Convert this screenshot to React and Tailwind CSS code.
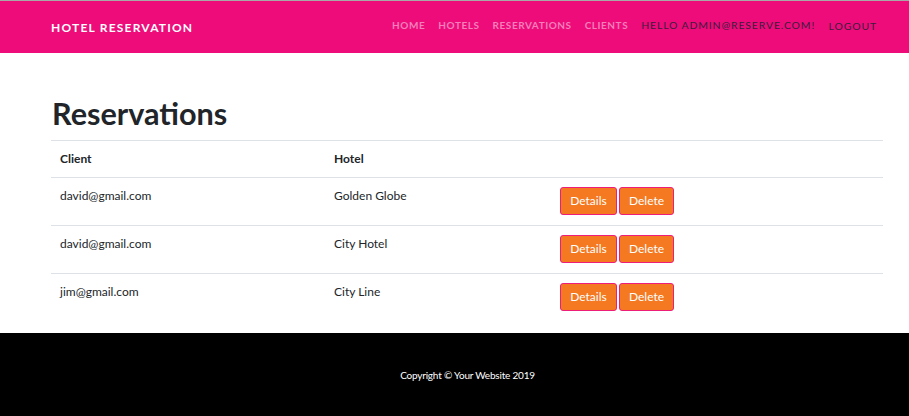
import React from 'react';

const navLinks = ['Home', 'Hotels', 'Reservations', 'Clients'];

const reservations = [
  { client: 'david@gmail.com', hotel: 'Golden Globe' },
  { client: 'david@gmail.com', hotel: 'City Hotel' },
  { client: 'jim@gmail.com', hotel: 'City Line' },
];

const App = () => {
  return (
    <div className="min-h-[416px] flex flex-col bg-white font-['Lato',_'Liberation_Sans',_sans-serif] text-[#212529]">
      <nav className="h-[53px] border-t border-[#a8a8a8] bg-[#ed0c7a] flex items-center justify-between pl-[51px] pr-[32px]">
        <span className="text-white text-[12px] font-bold tracking-[1.2px] uppercase mt-[1px]">Hotel Reservation</span>
        <ul className="flex items-center text-[10.4px] uppercase tracking-[0.9px] mb-[3px]">
          {navLinks.map((link) => (
            <li key={link} className="px-[6.5px] text-[10px] font-bold tracking-[0.55px] text-[#f47fba]">{link}</li>
          ))}
          <li className="px-[6.5px] text-[#3b1d3c]">Hello admin@reserve.com!</li>
          <li className="pl-[7px] text-[#3b1d3c] mt-[2px]">Logout</li>
        </ul>
      </nav>

      <main className="flex-1 pl-[51px] pr-[26px] pt-[43px] pb-[8px]">
        <h1 className="text-[30.6px] leading-[36px] font-bold mb-[8px] ml-[1px]">Reservations</h1>
        <div className="text-[12px] leading-[18px]">
          <div className="grid grid-cols-[274px_226px_1fr] border-t border-[#dee2e6] font-bold">
            <div className="px-[9px] py-[9px]">Client</div>
            <div className="px-[9px] py-[9px]">Hotel</div>
            <div></div>
          </div>
          {reservations.map((r, i) => (
            <div key={i} className="grid grid-cols-[274px_226px_1fr] border-t border-[#dee2e6]">
              <div className="px-[9px] pt-[9px]">{r.client}</div>
              <div className="px-[9px] pt-[9px]">{r.hotel}</div>
              <div className="px-[9px] pt-[9px] pb-[10px] flex gap-[2px]">
                <button className="h-[28px] w-[57px] bg-[#f47920] border border-[#ed1e79] rounded-[3px] text-white text-[12px]">Details</button>
                <button className="h-[28px] w-[55px] bg-[#f47920] border border-[#ed1e79] rounded-[3px] text-white text-[12px]">Delete</button>
              </div>
            </div>
          ))}
        </div>
      </main>

      <footer className="h-[83px] bg-black flex items-center justify-center pl-[26px]">
        <p className="text-white text-[10px] tracking-[-0.2px] mt-[2px]">Copyright © Your Website 2019</p>
      </footer>
    </div>
  );
};

export default App;
